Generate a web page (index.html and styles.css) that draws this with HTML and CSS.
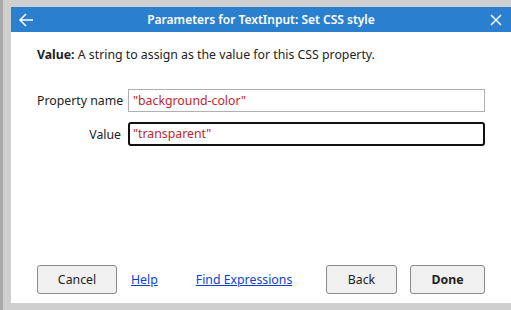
FILE: index.html
```html
<!DOCTYPE html>
<html lang="en">
<head>
    <meta charset="UTF-8">
    <title>Parameters for TextInput: Set CSS style</title>
    <link rel="stylesheet" href="styles.css">
</head>
<body>
    <div class="backdrop">
        <div class="dialog">
            <div class="titlebar">
                <button class="icon-btn" title="Back">
                    <svg width="16" height="16" viewBox="0 0 16 16"><path d="M15 8H2M8 2L2 8l6 6" fill="none" stroke="#fff" stroke-width="1.5"/></svg>
                </button>
                <div class="title">Parameters for TextInput: Set CSS style</div>
                <button class="icon-btn" title="Close">
                    <svg width="14" height="14" viewBox="0 0 14 14"><path d="M2 2l10 10M12 2L2 12" fill="none" stroke="#fff" stroke-width="1.5"/></svg>
                </button>
            </div>
            <div class="content">
                <p class="hint"><b>Value:</b> A string to assign as the value for this CSS property.</p>
                <div class="fields">
                    <label class="field-label">Property name</label>
                    <div class="input">"background-color"</div>
                    <label class="field-label">Value</label>
                    <div class="input focused">"transparent"</div>
                </div>
            </div>
            <div class="footer">
                <button class="button">Cancel</button>
                <a href="#" class="link">Help</a>
                <a href="#" class="link">Find Expressions</a>
                <span class="spacer"></span>
                <button class="button back">Back</button>
                <button class="button done">Done</button>
            </div>
        </div>
    </div>
</body>
</html>
```

FILE: styles.css
```css
body {
    margin: 0;
    font-family: "Noto Sans", "Open Sans", sans-serif;
    font-size: 12.3px;
    color: #222;
    background-color: #cfcfcf;
}
.backdrop {
    height: 310px;
    box-sizing: border-box;
    padding: 7px 0 7px 8px;
    border-left: 3px solid #a9a9a9;
}
.dialog {
    height: 296px;
    background-color: #fff;
    display: flex;
    flex-direction: column;
}
.titlebar {
    height: 25px;
    background-color: #2a7fcf;
    color: #fff;
    display: flex;
    align-items: center;
}
.icon-btn {
    width: 30px;
    height: 25px;
    border: none;
    background: none;
    padding: 0;
    display: flex;
    align-items: center;
    justify-content: center;
}
.title {
    flex: 1;
    text-align: center;
    font-size: 12px;
    font-weight: 600;
}
.content {
    flex: 1;
    padding: 0 26px;
}
.hint {
    margin: 14px 0 0;
}
.fields {
    display: grid;
    grid-template-columns: 84px 357px;
    column-gap: 7px;
    row-gap: 10px;
    align-items: center;
    margin-top: 26px;
}
.field-label {
    text-align: right;
    white-space: nowrap;
}
.input {
    height: 23px;
    box-sizing: border-box;
    border: 1px solid #b0b0b0;
    padding: 0 4px;
    line-height: 21px;
    color: #c0262d;
}
.input.focused {
    height: 24px;
    border: 2px solid #111;
    border-radius: 3px;
    padding: 0 3px;
    line-height: 20px;
}
.footer {
    display: flex;
    align-items: center;
    padding: 0 26px 9px;
}
.button {
    width: 80px;
    height: 29px;
    font-family: inherit;
    font-size: 12.3px;
    color: #222;
    background-color: #f0f0f0;
    border: 1px solid #8a8a8a;
    border-radius: 3px;
}
.link {
    color: #0a3fd6;
    text-decoration: underline;
    white-space: nowrap;
    margin-left: 14px;
}
.link + .link {
    margin-left: 38px;
}
.spacer {
    flex: 1;
}
.button.back {
    width: 71px;
    margin-right: 13px;
}
.button.done {
    width: 75px;
    font-weight: bold;
}
```
